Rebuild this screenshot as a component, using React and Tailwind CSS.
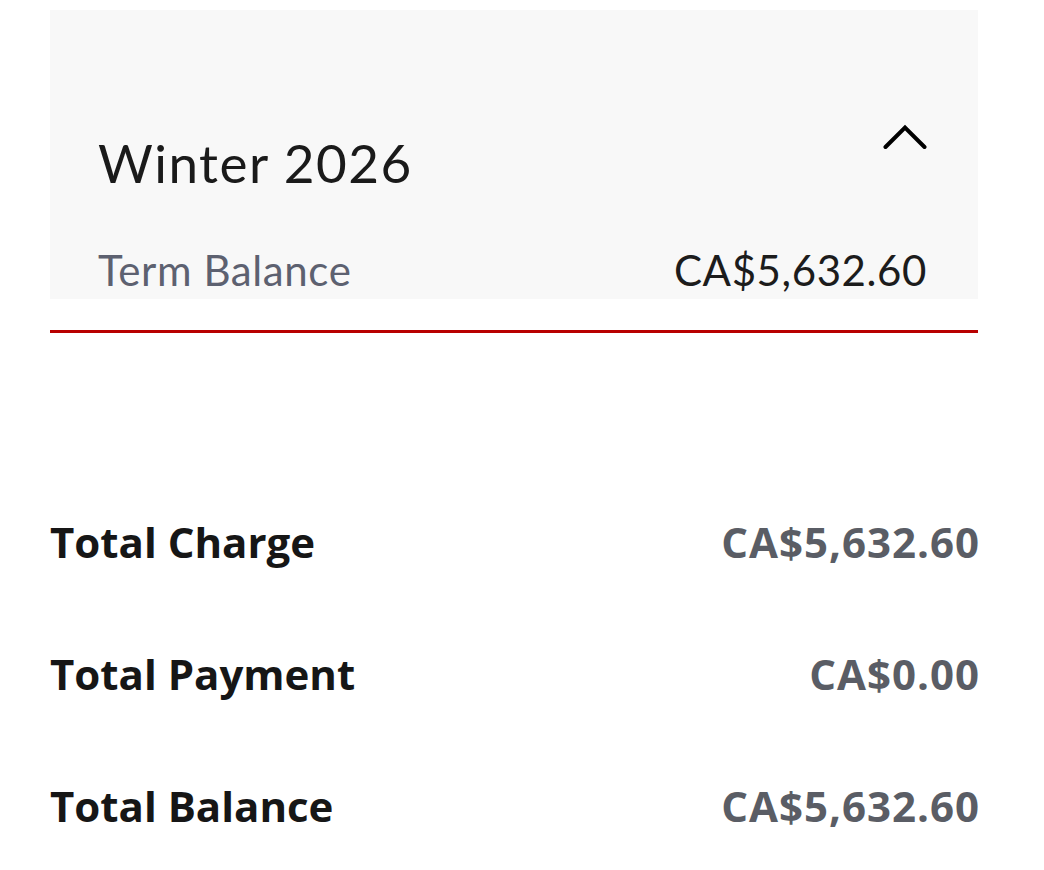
import React from 'react'

const rows = [
  { label: 'Total Charge', value: 'CA$5,632.60' },
  { label: 'Total Payment', value: 'CA$0.00' },
  { label: 'Total Balance', value: 'CA$5,632.60' },
]

export default function App() {
  return (
    <div className="min-h-[870px] bg-white pl-[50px] pr-[66px] pt-[10px] w-[1044px]">
      {/* Term header */}
      <div className="bg-[#f8f8f8] pl-[48px] pr-[51px] pt-[114px] pb-[4px] font-['Lato',sans-serif]">
        <div className="flex items-start justify-between">
          <h2 className="text-[53px] leading-[1.2] tracking-[1.5px] text-[#1a1a1a] mt-[7px]">Winter 2026</h2>
          <button className="w-[44px] h-[26px] flex items-center justify-center">
            <svg width="44" height="26" viewBox="0 0 44 26" fill="none">
              <path d="M2.5 23 L22 3.5 L41.5 23" stroke="#000" strokeWidth="4" strokeLinecap="round" strokeLinejoin="miter" />
            </svg>
          </button>
        </div>
        <div className="flex items-center justify-between mt-[50px] text-[42px] leading-[1.2] tracking-[0.6px]">
          <span className="text-[#5d6170]">Term Balance</span>
          <span className="text-[#1c1c1c]">CA$5,632.60</span>
        </div>
      </div>
      <div className="h-[3px] bg-[#b80000] mt-[31px]" />

      {/* Totals */}
      <div className="flex flex-col gap-[76px] mt-[181px] font-['Open_Sans',sans-serif]">
        {rows.map(r => (
          <div key={r.label} className="flex items-center justify-between text-[42px] leading-[56px] font-bold">
            <span className="text-[#161616]">{r.label}</span>
            <span className="text-[#5a5d65] tracking-[1px] -mr-[2px]">{r.value}</span>
          </div>
        ))}
      </div>
    </div>
  )
}
